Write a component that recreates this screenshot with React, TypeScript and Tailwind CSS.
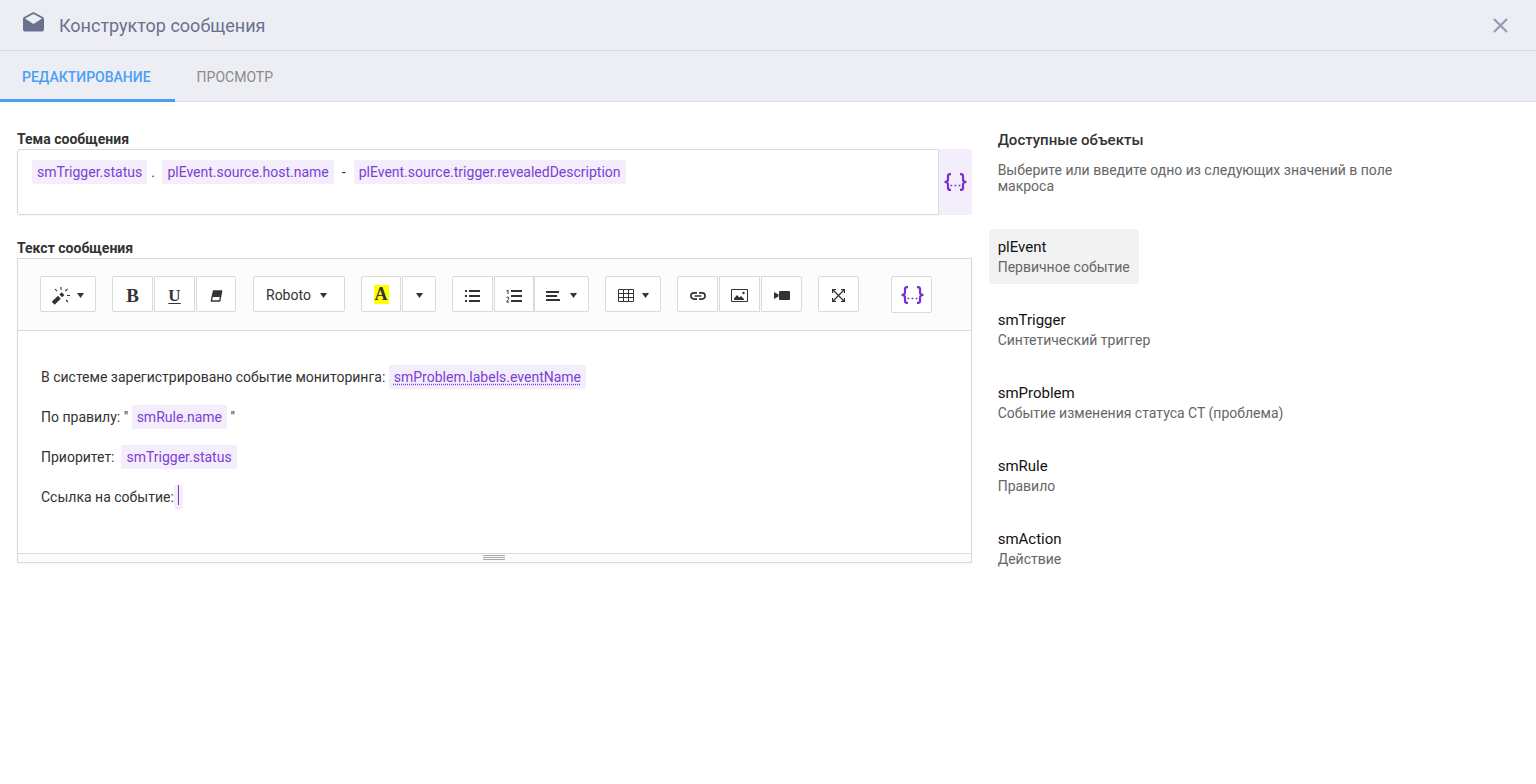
import React, { useState } from "react";
import clsx from "clsx";

const TABS = ["Редактирование", "Просмотр"];

const OBJECTS = [
  { name: "plEvent", description: "Первичное событие" },
  { name: "smTrigger", description: "Синтетический триггер" },
  { name: "smProblem", description: "Событие изменения статуса СТ (проблема)" },
  { name: "smRule", description: "Правило" },
  { name: "smAction", description: "Действие" },
];

function Caret() {
  return (
    <svg width="7" height="5" viewBox="0 0 7 5" fill="currentColor" aria-hidden="true">
      <path d="M0 0h7L3.5 5z" />
    </svg>
  );
}

function MacroIcon() {
  return (
    <svg width="24" height="18" viewBox="0 0 24 18" fill="none" stroke="#7b2fd0" strokeWidth="2.2" aria-hidden="true">
      <path d="M8 1.200H7Q5 1.200 5 3v3.500Q5 9 1.500 9 5 9 5 11.500V15q0 1.800 2 1.800h1" />
      <path d="M17 1.200h1q2 0 2 1.800v3.500Q20 9 23.500 9 20 9 20 11.500V15q0 1.800-2 1.800h-1" />
      <path d="M7.500 12.500h1.700M11.600 12.500h1.700M15.700 12.500h1.700" strokeWidth="1.700" />
    </svg>
  );
}

function WandIcon() {
  return (
    <svg width="18" height="18" viewBox="0 0 18 18" stroke="currentColor" aria-hidden="true">
      <path d="M1.200 16.200 7.400 10.300M8.800 8.900l2.200-2.200" strokeWidth="4" fill="none" />
      <path d="M9 0v3M3 2l2 2.200M15.500 2l-2.200 2.200M15 8.500h3M14 13l2 2" strokeWidth="1.100" fill="none" />
    </svg>
  );
}

function EraserIcon() {
  return (
    <svg width="13" height="12" viewBox="0 0 13 12" aria-hidden="true">
      <path d="M3.500 1h8.200L9.700 11H1.300z" fill="#fff" stroke="currentColor" strokeWidth="1.300" strokeLinejoin="round" />
      <path d="M3.500 1h8.200l-1.200 6H2z" fill="currentColor" />
    </svg>
  );
}

function BulletListIcon() {
  return (
    <svg width="15" height="12" viewBox="0 0 15 12" fill="currentColor" aria-hidden="true">
      <path d="M0 0h2v2H0zM0 5h2v2H0zM0 10h2v2H0zM4 0h11v2H4zM4 5h11v2H4zM4 10h11v2H4z" />
    </svg>
  );
}

function NumberListIcon() {
  return (
    <svg width="16" height="14" viewBox="0 0 16 14" aria-hidden="true">
      <path d="M5 1h11v2H5zM5 6h11v2H5zM5 11h11v2H5z" fill="currentColor" />
      <path d="M.5 2 2 1v4M.4 9q.4-1 1.300-1T3 9q0 .8-2.400 4h2.600" fill="none" stroke="currentColor" />
    </svg>
  );
}

function AlignLeftIcon() {
  return (
    <svg width="14" height="10" viewBox="0 0 14 10" fill="currentColor" aria-hidden="true">
      <path d="M0 0h13v2H0zM0 4h11v2H0zM0 8h14v2H0z" />
    </svg>
  );
}

function TableIcon() {
  return (
    <svg width="16" height="13" viewBox="0 0 16 13" fill="none" stroke="currentColor" aria-hidden="true">
      <path d="M.5.500h15v12H.500zM0 4.500h16M0 8.500h16M5.500 0v13M10.500 0v13" />
    </svg>
  );
}

function LinkIcon() {
  return (
    <svg width="16" height="8" viewBox="0 0 16 8" fill="none" stroke="currentColor" strokeWidth="1.700" aria-hidden="true">
      <path d="M7 .9H4a3.100 3.100 0 0 0 0 6.200h3M9 .9h3a3.100 3.100 0 0 1 0 6.200H9M4.700 4h6.600" />
    </svg>
  );
}

function PictureIcon() {
  return (
    <svg width="17" height="13" viewBox="0 0 17 13" aria-hidden="true">
      <path d="M.5.500h16v12H.500z" fill="none" stroke="currentColor" />
      <path d="M3 11V9.500L6 6l2.300 2.500L10 7l3 3v1z" fill="currentColor" />
      <circle cx="12.500" cy="4" r="1.200" fill="currentColor" />
    </svg>
  );
}

function VideoIcon() {
  return (
    <svg width="16" height="9" viewBox="0 0 16 9" fill="currentColor" aria-hidden="true">
      <path d="M5 1Q5 0 6 0h9q1 0 1 1v7q0 1-1 1H6Q5 9 5 8zM0 1l4.500 2.500v2L0 8z" />
    </svg>
  );
}

function FullscreenIcon() {
  return (
    <svg width="13" height="13" viewBox="0 0 13 13" fill="none" stroke="currentColor" strokeWidth="1.200" aria-hidden="true">
      <path d="m1 1 11 11M12 1 1 12" />
      <path d="M.6 4V.600H4M9 .6h3.400V4M12.400 9v3.400H9M4 12.400H.600V9" />
    </svg>
  );
}

function Chip({ children, className = "px-[5px]" }: { children: React.ReactNode; className?: string }) {
  return (
    <span className={clsx("inline-block h-6 rounded-[2px] bg-[#f3edfc] leading-6 text-[#7b3fd4]", className)}>
      {children}
    </span>
  );
}

interface ToolButtonProps {
  label: string;
  className?: string;
  children: React.ReactNode;
}

function ToolButton({ label, className = "h-9 w-[41px] pt-[3px]", children }: ToolButtonProps) {
  return (
    <button
      type="button"
      aria-label={label}
      className={clsx(
        "flex cursor-pointer items-center justify-center border border-[#dadada] bg-white first:rounded-l-[2px] last:rounded-r-[2px] hover:bg-[#f3f3f3]",
        className
      )}
    >
      {children}
    </button>
  );
}

function ToolGroup({ children }: { children: React.ReactNode }) {
  return <div className="flex gap-px">{children}</div>;
}

export default function App() {
  const [tab, setTab] = useState(TABS[0]);
  const [selected, setSelected] = useState("plEvent");

  return (
    <div className="min-h-screen bg-white font-['Roboto','Liberation_Sans',sans-serif] text-sm text-[#333]">
      <header className="flex h-[51px] items-center justify-between border-b border-[#d8dae8] bg-[#edeef3] pt-px pr-7 pl-[23px]">
        <div className="flex items-center gap-[15px]">
          <svg width="21" height="20" viewBox="0 0 21 20" className="-mt-2" fill="#6a718f" aria-hidden="true">
            <path d="M10.500 0 1.200 5Q0 5.700 0 7v10.500Q0 19.500 2 19.500h17q2 0 2-2V7q0-1.300-1.200-2zM10.500 12 2 6.500l8.500-4.400L19 6.500z" />
          </svg>
          <h1 className="text-lg leading-6 text-[#6a718f]">Конструктор сообщения</h1>
        </div>
        <button type="button" aria-label="Закрыть" className="cursor-pointer text-[#949bb2]">
          <svg width="15" height="15" viewBox="0 0 15 15" fill="none" stroke="currentColor" strokeWidth="2.2" aria-hidden="true">
            <path d="m1 1 13 13M14 1 1 14" />
          </svg>
        </button>
      </header>

      <div role="tablist" className="flex h-[51px] border-b border-[#d8dae8] bg-[#edeef3]">
        {TABS.map((item) => (
          <button
            key={item}
            type="button"
            role="tab"
            aria-selected={tab === item}
            onClick={() => setTab(item)}
            className={clsx(
              "-mb-px cursor-pointer border-b-[3px] pt-[3px] pr-6 pl-[22px] uppercase",
              tab === item ? "border-[#4a9ff5] font-medium text-[#4a9ff5]" : "border-transparent text-[#8a8a8a]"
            )}
          >
            {item}
          </button>
        ))}
      </div>

      <main className="grid grid-cols-[9fr_5fr] gap-[17px] px-[17px] pt-7">
        <div>
          <div id="subject-label" className="pb-px leading-[18px] font-bold">
            Тема сообщения
          </div>
          <div className="flex h-[66px]">
            <div
              role="textbox"
              aria-labelledby="subject-label"
              contentEditable
              suppressContentEditableWarning
              className="min-w-0 flex-1 rounded-l-[3px] border border-[#dadada] px-[14px] py-[10px] leading-6 shadow-xs outline-none"
            >
              <Chip>smTrigger.status</Chip>
              <span className="px-1">.</span> <Chip>plEvent.source.host.name</Chip>
              <span className="px-2">-</span>
              <Chip>plEvent.source.trigger.revealedDescription</Chip>
            </div>
            <button
              type="button"
              aria-label="Вставить макрос"
              className="flex w-[33px] cursor-pointer items-center justify-center rounded-r-[3px] bg-[#f3edfc]"
            >
              <MacroIcon />
            </button>
          </div>

          <div id="body-label" className="pt-6 pb-px leading-[18px] font-bold">
            Текст сообщения
          </div>
          <div className="border border-[#dadada] shadow-xs">
            <div className="flex flex-wrap gap-4 border-b border-[#dadada] bg-[#fcfcfc] px-[22px] py-[17px]">
              <ToolGroup>
                <ToolButton label="Стиль" className="h-9 w-14 gap-[7px] pt-[3px]">
                  <WandIcon />
                  <Caret />
                </ToolButton>
              </ToolGroup>
              <ToolGroup>
                <ToolButton label="Полужирный">
                  <span className="font-['Liberation_Serif',serif] text-[19px] leading-5 font-bold">B</span>
                </ToolButton>
                <ToolButton label="Подчёркнутый">
                  <span className="font-['Liberation_Serif',serif] text-[17px] leading-5 font-bold underline underline-offset-2">
                    U
                  </span>
                </ToolButton>
                <ToolButton label="Очистить формат" className="h-9 w-10 pt-[3px]">
                  <EraserIcon />
                </ToolButton>
              </ToolGroup>
              <div className="relative ml-px">
                <select
                  aria-label="Шрифт"
                  className="h-9 w-[92px] cursor-pointer appearance-none rounded-[2px] border border-[#dadada] bg-white px-3 pt-px outline-none"
                >
                  <option>Roboto</option>
                </select>
                <span className="pointer-events-none absolute top-[17px] right-[18px]">
                  <Caret />
                </span>
              </div>
              <ToolGroup>
                <ToolButton label="Цвет фона" className="h-9 w-10 pt-px">
                  <span className="bg-[#ffff00] px-px font-['Liberation_Serif',serif] text-lg leading-[19px] font-bold">A</span>
                </ToolButton>
                <ToolButton label="Выбрать цвет" className="h-9 w-[34px] pt-[3px]">
                  <Caret />
                </ToolButton>
              </ToolGroup>
              <ToolGroup>
                <ToolButton label="Маркированный список">
                  <BulletListIcon />
                </ToolButton>
                <ToolButton label="Нумерованный список" className="h-9 w-10 pt-[3px]">
                  <NumberListIcon />
                </ToolButton>
                <ToolButton label="Выравнивание" className="-ml-px h-9 w-[55px] gap-[10px] pt-[3px]">
                  <AlignLeftIcon />
                  <Caret />
                </ToolButton>
              </ToolGroup>
              <ToolGroup>
                <ToolButton label="Таблица" className="h-9 w-14 gap-2 pt-[3px]">
                  <TableIcon />
                  <Caret />
                </ToolButton>
              </ToolGroup>
              <ToolGroup>
                <ToolButton label="Ссылка">
                  <LinkIcon />
                </ToolButton>
                <ToolButton label="Изображение">
                  <PictureIcon />
                </ToolButton>
                <ToolButton label="Видео">
                  <VideoIcon />
                </ToolButton>
              </ToolGroup>
              <ToolGroup>
                <ToolButton label="На весь экран">
                  <FullscreenIcon />
                </ToolButton>
              </ToolGroup>
              <div className="ml-4">
                <ToolButton label="Вставить макрос" className="h-[37px] w-[41px]">
                  <MacroIcon />
                </ToolButton>
              </div>
            </div>

            <div
              role="textbox"
              aria-multiline="true"
              aria-labelledby="body-label"
              contentEditable
              suppressContentEditableWarning
              className="flex flex-col gap-4 px-[23px] pt-[34px] pb-11 leading-6 outline-none"
            >
              <p>
                В системе зарегистрировано событие мониторинга:{" "}
                <Chip className="px-[5px] underline decoration-dotted underline-offset-2">smProblem.labels.eventName</Chip>
              </p>
              <p>
                По правилу: " <Chip>smRule.name</Chip> "
              </p>
              <p>
                Приоритет: &nbsp;<Chip>smTrigger.status</Chip>
              </p>
              <p className="flex">
                Ссылка на событие:
                <Chip className="px-1">
                  <span className="block h-5 w-px bg-[#7b2fd0]" />
                </Chip>
              </p>
            </div>

            <div className="flex h-[9px] cursor-ns-resize flex-col items-center gap-px border-t border-[#dadada] bg-[#fcfcfc] pt-px">
              <span className="h-px w-[22px] bg-[#a9a9a9]" />
              <span className="h-px w-[22px] bg-[#a9a9a9]" />
              <span className="h-px w-[22px] bg-[#a9a9a9]" />
            </div>
          </div>
        </div>

        <aside>
          <div className="pl-[9px]">
            <h2 className="text-[15px] leading-5 font-medium">Доступные объекты</h2>
            <p className="mt-3 max-w-[440px] leading-4 text-[#666]">
              Выберите или введите одно из следующих значений в поле макроса
            </p>
          </div>
          <ul className="mt-[35px] flex flex-col gap-[18px]">
            {OBJECTS.map(({ name, description }) => (
              <li key={name}>
                <button
                  type="button"
                  onClick={() => setSelected(name)}
                  className={clsx(
                    "cursor-pointer rounded-[3px] px-[9px] pt-2 pb-[7px] text-left leading-5",
                    selected === name && "bg-[#f2f2f2]"
                  )}
                >
                  <span className="block text-[15px] text-[#111]">{name}</span>
                  <span className="block text-[#666]">{description}</span>
                </button>
              </li>
            ))}
          </ul>
        </aside>
      </main>
    </div>
  );
}
